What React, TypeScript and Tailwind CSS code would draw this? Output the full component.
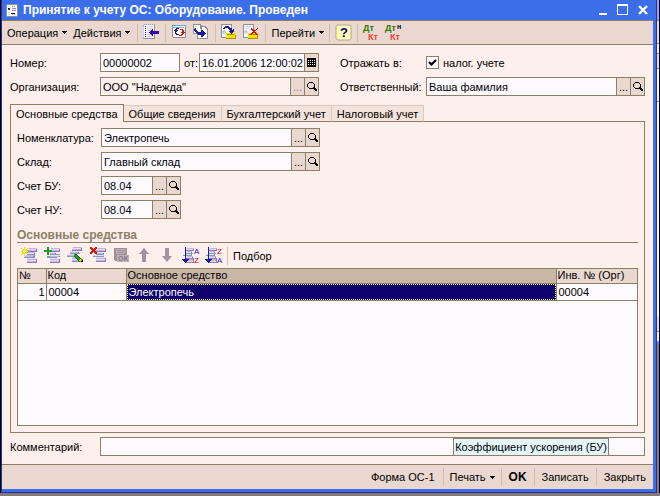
import type { ReactNode } from 'react';

const palette: Record<string, string> = {
    k: '#000000',
    w: '#ffffff',
    n: '#1a1a9c',
    b: '#3300b0',
    g: '#8f8f9c',
    l: '#c9cfe6',
    v: '#c4b4e0',
    p: '#8a7fae',
    q: '#e6dcf4',
    t: '#7d9fb4',
    c: '#6fa8e0',
    y: '#f2e400',
    o: '#a89400',
    r: '#dd1500',
    e: '#1f9a2a',
    d: '#0f6a14',
    s: '#9c8f98',
    u: '#c0b2b4',
};

// one character is one pixel, a dot is empty
const Pixels = ({ rows, size = 17, children }: { rows: string[]; size?: number; children?: ReactNode }) => (
    <svg
        width={size}
        height={size}
        viewBox={`0 0 ${size} ${size}`}
        shapeRendering="crispEdges"
        className="shrink-0 overflow-visible"
        aria-hidden="true"
    >
        {rows.flatMap((row, y) =>
            [...row].map((ch, x) =>
                palette[ch] ? <rect key={`${x}-${y}`} x={x} y={y} width="1" height="1" fill={palette[ch]} /> : null
            )
        )}
        {children}
    </svg>
);

const formRows = [
    'gggggggggggg',
    'gwwwwwwwwwwg',
    'gwlwwwgwgwwg',
    'gwwwwwwwwwwg',
    'gwnnwwggggwg',
    'gwnnwwwwwwwg',
    'gwwwwwggggwg',
    'gwwwwwwwwwwg',
    'gwllwwwwwwwg',
    'gwwwwkkkkwwg',
    'gwllwwllllwg',
    'gwwwwwwwwwwg',
    'gggggggggggg',
];

const listRows = [
    '.c.c.c.c.c.c....',
    'cwwwwwwwwwwg....',
    'lwnwllllllwg....',
    'lwwwwwwwwwwg....',
    'lwnwllllllwg....',
    'lwwwwwwwwbwg....',
    'lwnwllllbbwg....',
    'lwwwwwwbbbbbbbbb',
    'lwnwllbbbbbbbbbb',
    'lwwwwwwbbbbbbbbb',
    'lwnwllllbbwg....',
    'lwwwwwwwwbwg....',
    'lwnwllllllwg....',
    'lwwwwwwwwwwg....',
    'cggggggggggg....',
];

const refreshRows = [
    '.................',
    '.ececcccccccccc..',
    '.cwwwwwwwwwwwwc..',
    '.gcccccccccccwg..',
    '.gwwwnnnwwwwwwg..',
    '.gwwnnwwwrrrwwg..',
    '.gwnnnnwwwwrrwg..',
    '.gwwnnwwwwwrrwg..',
    '.gwwnwwwwwrrrrg..',
    '.gwwnnwwwwwrrwg..',
    '.gwwwnnnwwrrwwg..',
    '.gwwwwwwrrrwwwg..',
    '.gwwwwwwwwwwwwg..',
    '.lggggggggggggg..',
];

const copyRows = [
    'gggggggg.........',
    'gwwwwwwgg........',
    'gwllwwwgggggg....',
    'gwwwwwwggwwwgg...',
    'gvnwlwwggwwwwgg..',
    'gnnwwwwwgwwwwwg..',
    'gnnnwwwwnnwwwwg..',
    'gwnnnwwwnnnwwwg..',
    'gwwnnnnnnnnnwwg..',
    'ggggnnnnnnnnnwg..',
    '....gnnnnnnnwwg..',
    '....gwwwnnnwwwg..',
    '....gwwwnnwwwwg..',
    '....gwwwwwwwwwg..',
    '....ggggggggggg..',
];

const postRows = [
    'ggggggggggg......',
    'gwwwwwwwwwg......',
    'gwwwnnnnwwg......',
    'gwwnnnnnnwg......',
    'gwnnwwwnnnn......',
    'gwwwwwwwnnn.n....',
    'gwllwwwwwnnnn....',
    'gllllwwwnnnnn....',
    'gllllwwwwnnn.....',
    'gwllwyyyyynyyyy..',
    'gwwwwyoooooooyy..',
    'gwwwwyyyyyyyyyo..',
    'gwwwwyyyyyyyyyo..',
    'gggggyyyyyyyyyo..',
    '.....oooooooooo..',
];

const unpostRows = [
    'ggggggggggg......',
    'gwwwwwwwwwg......',
    'gwllllllwwg......',
    'gwwwwwwwwwg......',
    'gwllllwwrwg...r..',
    'gwwwwwwwrrr..r...',
    'gwllwwwwwrrrr....',
    'gllllwwwwwrr.....',
    'gllllwwwwrrrr....',
    'gwllwyyyrryyrry..',
    'gwwwwyorroooorr..',
    'gwwwwyyyyyyyyyo..',
    'gwwwwyyyyyyyyyo..',
    'gggggyyyyyyyyyo..',
    '.....oooooooooo..',
];

const newRows = [
    '...y.............',
    'y..y..yqvvvvvvvv.',
    '.yyyyyqqqqqqqqqp.',
    '.yywyyvvvvvvvvvp.',
    'yywwwyyppppppppp.',
    '.yywyytvvvvvvv...',
    '.yyyyyqqqqqqqp...',
    'y..y..tttttttt...',
    '...y.vvvvvvvvp...',
    '...qvvvvvvvvpp...',
    '...ttttttttttt...',
    '......qqqqqqqqqq.',
    '......vvvvvvvvvp.',
    '......qqqqqqqqqp.',
    '......vvvvvvvvvp.',
    '......pppppppppp.',
];

const addRows = [
    '...ee............',
    '...ee.qvvvvvvvvv.',
    '...ee.qqqqqqqqqp.',
    'eeeeeeeevvvvvvvp.',
    'eeeeeeeepppppppp.',
    '...ee.qqqqqq.....',
    '...ee.vvvvvp.....',
    '...ee.tttttttttt.',
    '......qqqqqqqqqq.',
    '...tttvvvvvvvvvp.',
    '...tttttttttt....',
    '......qqqqqqqqqq.',
    '......vvvvvvvvvp.',
    '......qqqqqqqqqp.',
    '......vvvvvvvvvp.',
    '......pppppppppp.',
];

const editRows = [
    '.....qvvvvvvvvv..',
    '.....qqqqqqqqqp..',
    '.....vvvvvvvvvp..',
    '.....pppppppppp..',
    '...qqqqqqqqq.....',
    '...vvvvvvvvp.....',
    '...tttttttttt....',
    'qqqqqqqodd.......',
    'vvvvvvveeed......',
    'tttttttdeeed.....',
    '.....qvvdeeed....',
    '.....vvvvdeeedo..',
    '.....qqqqqdeeyoo.',
    '.....vvvvvvdyyok.',
    '.....pppppppdokk.',
];

const deleteRows = [
    'rr...rr..........',
    'rrr.rrrqvvvvvvvv.',
    '.rrrrrqqqqqqqqqp.',
    '..rrrvvvvvvvvvvp.',
    '.rrrrrpppppppppp.',
    'rrr.rrrqqqqqqq...',
    'rr...rrvvvvvvp...',
    '......tttttttt...',
    '...qqqqqqqqqqq...',
    '...ttttttttttt...',
    '......qqqqqqqqqq.',
    '......vvvvvvvvvp.',
    '......qqqqqqqqqp.',
    '......vvvvvvvvvp.',
    '......pppppppppp.',
];

const diskRows = [
    '.................',
    '.sssssssssssss...',
    '.ssuuuuuuuuuss...',
    '.ssussssssssus...',
    '.ssuuuuuuuuuss...',
    '.ssussssssssus...',
    '.ssuuuuuuuuuss...',
    '.sssssssssssss...',
    '.sssuuuuuuuuuuuu.',
    '.sssuuuuuuuuuuuu.',
    '.sssuuuuuuuuuuuu.',
    '.sssuuuuuuuuuuuu.',
    '.sssuuuuuuuuuuuu.',
    '..ssuuuuuuuuuuuu.',
    '....uuuuuuuuuuuu.',
];

const sortRows = [
    '...n.............',
    '...nqvvvvvvv.....',
    '...nqqqqqqqp.....',
    '...npppppppp.....',
    '...nqvvvvv.......',
    '...nqqqqqp.......',
    '...nttttttt......',
    '.qqnqqqqqt.......',
    '.ttntttttt.......',
    '...nqvvvvvv......',
    '...nqqqqqqp......',
    '...npppppppp.....',
    'nnnnnnnvvvvp.....',
    '.nnnnnvvvvvp.....',
    '..nnnqqqqqqp.....',
    '...npppppppp.....',
];

const searchRows = [
    '.............',
    '...kkkk......',
    '..k....k.....',
    '.k......k....',
    '.k......k....',
    '.k......k....',
    '..k....kk....',
    '...kkkkkkk...',
    '........kkk..',
    '.........kk..',
];

const SortIcon = ({ top, bottom }: { top: string; bottom: string }) => (
    <Pixels rows={sortRows}>
        <text x="12" y="7" fontSize="8" fill={top === 'Z' ? '#d00010' : '#1a1a9c'}>
            {top}
        </text>
        <text x="12" y="16" fontSize="8" fill={bottom === 'Z' ? '#d00010' : '#1a1a9c'}>
            {bottom}
        </text>
    </Pixels>
);

const PostingsIcon = ({ tax }: { tax?: boolean }) => (
    <svg width="17" height="17" viewBox="0 0 17 17" aria-hidden="true" fontWeight="bold" className="overflow-visible">
        <text x="0" y="7" fontSize="9" fill="#2c7a00">Дт</text>
        <text x="5" y="16" fontSize="9" fill="#f03c3c">Кт</text>
        {tax && <text x="12" y="5" fontSize="7" fill="#000000">н</text>}
    </svg>
);

const HelpIcon = () => (
    <svg width="17" height="17" viewBox="0 0 17 17" aria-hidden="true">
        <rect x="1" y="1" width="15" height="15" rx="2" fill="#ffffb4" stroke="#a8a890" />
        <text x="5" y="13" fontSize="13" fontWeight="bold" fill="#00007c">?</text>
    </svg>
);

const ArrowIcon = ({ down }: { down?: boolean }) => (
    <svg width="17" height="17" viewBox="0 0 17 17" aria-hidden="true">
        <path d={down ? 'M6 1h4v8h3l-5 6-5-6h3z' : 'M6 15h4V7h3L8 1 3 7h3z'} fill="#a094a4" />
    </svg>
);

const Caret = () => (
    <svg width="5" height="3" viewBox="0 0 5 3" shapeRendering="crispEdges" aria-hidden="true">
        <path d="M0 0h5v1H4v1H3v1H2V2H1V1H0z" fill="#000000" />
    </svg>
);

const CalendarIcon = () => (
    <svg width="11" height="11" viewBox="0 0 11 11" shapeRendering="crispEdges" className="shrink-0" aria-hidden="true">
        <path d="M1 1h9v9H1z" fill="#000000" />
        <path
            d="M2 3h1v1H2zM4 3h1v1H4zM6 3h1v1H6zM8 3h1v1H8zM2 5h1v1H2zM4 5h1v1H4zM6 5h1v1H6zM8 5h1v1H8zM2 7h1v1H2zM4 7h1v1H4zM6 7h1v1H6zM8 7h1v1H8z"
            fill="#ffffff"
        />
    </svg>
);

const IconButton = ({ label, children }: { label: string; children: ReactNode }) => (
    <button type="button" aria-label={label} className="flex w-[17px] shrink-0 items-center justify-center">
        {children}
    </button>
);

const Separator = () => <span className="h-[18px] w-px shrink-0 bg-[#cdbdad]" />;

type FieldProps = {
    id: string;
    value?: string;
    picker?: 'search' | 'date';
    disabled?: boolean;
    className?: string;
};

const Field = ({ id, value = '', picker, disabled, className = '' }: FieldProps) => (
    <div className={`flex h-[19px] min-w-0 border border-[#8c7f66] bg-[#fdfaff] ${className}`}>
        <input
            id={id}
            defaultValue={value}
            className={`min-w-0 flex-1 outline-none ${disabled ? 'm-px bg-[#fdefeb] pl-px' : 'pl-[2px]'}`}
        />
        {picker === 'search' && (
            <>
                <button
                    type="button"
                    aria-label="Выбрать"
                    className={`w-[14px] shrink-0 border-l border-[#8c7f66] bg-[#ead8d0] leading-3 ${disabled ? 'text-[#8c7f66]' : ''}`}
                >
                    ...
                </button>
                <button
                    type="button"
                    aria-label="Открыть"
                    className="flex w-[14px] shrink-0 items-center justify-center border-l border-[#8c7f66] bg-[#ead8d0]"
                >
                    <Pixels rows={searchRows} size={12} />
                </button>
            </>
        )}
        {picker === 'date' && (
            <button
                type="button"
                aria-label="Календарь"
                className="flex w-[14px] shrink-0 items-center justify-center border-l border-[#8c7f66] bg-[#ead8d0]"
            >
                <CalendarIcon />
            </button>
        )}
    </div>
);

const TitleBar = () => (
    <header className="flex h-5 shrink-0 items-center bg-[#3c6eea] pr-1 pl-1 text-white">
        <Pixels rows={formRows} size={13} />
        <h1 className="ml-1 flex-1 truncate text-[12px] font-bold">Принятие к учету ОС: Оборудование. Проведен</h1>
        <div className="flex items-center gap-2">
            <button type="button" aria-label="Свернуть">
                <svg width="12" height="12" viewBox="0 0 12 12" aria-hidden="true">
                    <path d="M2 9h8v2H2z" fill="#ffffff" />
                </svg>
            </button>
            <button type="button" aria-label="Развернуть">
                <svg width="12" height="12" viewBox="0 0 12 12" shapeRendering="crispEdges" aria-hidden="true">
                    <path d="M0 0h11v11H0zM1 2v8h9V2z" fill="#ffffff" fillRule="evenodd" />
                </svg>
            </button>
            <button type="button" aria-label="Закрыть окно">
                <svg width="12" height="12" viewBox="0 0 12 12" aria-hidden="true">
                    <path d="M2 2l8 8M10 2l-8 8" stroke="#ffffff" strokeWidth="2.4" />
                </svg>
            </button>
        </div>
    </header>
);

const MainToolbar = () => (
    <div className="flex h-[25px] shrink-0 items-center gap-[5px] border-t border-b border-[#8c7f66] bg-[#ead8d0] pl-[5px]">
        <button type="button" className="mr-px flex items-center gap-1">
            Операция <Caret />
        </button>
        <button type="button" className="mr-[2px] flex items-center gap-1">
            Действия <Caret />
        </button>
        <Separator />
        <IconButton label="Найти в списке"><Pixels rows={listRows} /></IconButton>
        <Separator />
        <IconButton label="Перечитать"><Pixels rows={refreshRows} /></IconButton>
        <IconButton label="Скопировать"><Pixels rows={copyRows} /></IconButton>
        <Separator />
        <IconButton label="Провести"><Pixels rows={postRows} /></IconButton>
        <IconButton label="Отмена проведения"><Pixels rows={unpostRows} /></IconButton>
        <Separator />
        <button type="button" className="flex items-center gap-1">
            Перейти <Caret />
        </button>
        <Separator />
        <IconButton label="Справка"><HelpIcon /></IconButton>
        <Separator />
        <IconButton label="Проводки"><PostingsIcon /></IconButton>
        <IconButton label="Налоговые проводки"><PostingsIcon tax /></IconButton>
    </div>
);

const tabs = ['Основные средства', 'Общие сведения', 'Бухгалтерский учет', 'Налоговый учет'];

const Tabs = () => (
    <div role="tablist" className="relative z-10 -mb-px flex h-[18px] items-stretch">
        {tabs.map((tab, i) => (
            <button
                key={tab}
                type="button"
                role="tab"
                aria-selected={i === 0}
                className={
                    i === 0
                        ? 'border-t border-r border-l border-[#8c7f66] bg-[#fdefeb] px-[5px]'
                        : 'mt-px border-t border-r border-b border-t-[#d8c8ba] border-r-[#d8c8ba] border-b-[#8c7f66] bg-[#f3e3dc] px-[5px]'
                }
            >
                {tab}
            </button>
        ))}
    </div>
);

const fields = [
    { id: 'item', label: 'Номенклатура:', value: 'Электропечь', width: 'w-[219px]' },
    { id: 'stock', label: 'Склад:', value: 'Главный склад', width: 'w-[219px]' },
    { id: 'account-bu', label: 'Счет БУ:', value: '08.04', width: 'w-20' },
    { id: 'account-nu', label: 'Счет НУ:', value: '08.04', width: 'w-20' },
];

const ListToolbar = () => (
    <div className="flex h-[25px] shrink-0 items-center gap-[5px] pl-1">
        <div className="flex gap-[6px]">
            <IconButton label="Добавить"><Pixels rows={newRows} /></IconButton>
            <IconButton label="Добавить копированием"><Pixels rows={addRows} /></IconButton>
            <IconButton label="Изменить"><Pixels rows={editRows} /></IconButton>
            <IconButton label="Удалить"><Pixels rows={deleteRows} /></IconButton>
            <IconButton label="Закончить редактирование">
                <Pixels rows={diskRows}>
                    <text x="5" y="14" fontSize="7" fontWeight="bold" fill="#85788a">OK</text>
                </Pixels>
            </IconButton>
            <IconButton label="Переместить вверх"><ArrowIcon /></IconButton>
            <IconButton label="Переместить вниз"><ArrowIcon down /></IconButton>
            <IconButton label="По возрастанию"><SortIcon top="A" bottom="Z" /></IconButton>
            <IconButton label="По убыванию"><SortIcon top="Z" bottom="A" /></IconButton>
        </div>
        <Separator />
        <button type="button">Подбор</button>
    </div>
);

const AssetTable = () => (
    <div className="flex-1 border border-[#8c7f66] bg-[#fdfaff]">
        <table className="w-full table-fixed border-collapse text-left whitespace-nowrap">
            <colgroup>
                <col className="w-7" />
                <col className="w-20" />
                <col />
                <col className="w-[81px]" />
            </colgroup>
            <thead>
                <tr className="h-[14px] border-b border-[#8c7f66] bg-[#ead8d0] leading-[13px]">
                    <th className="border-r border-[#8c7f66] px-px font-normal">№</th>
                    <th className="border-r border-[#8c7f66] px-px font-normal">Код</th>
                    <th className="border-r border-[#8c7f66] bg-[#cab8a6] px-px font-normal">Основное средство</th>
                    <th className="px-px font-normal">Инв. № (Орг)</th>
                </tr>
            </thead>
            <tbody>
                <tr className="h-[17px] border-b border-[#8c7f66] leading-[14px]">
                    <td className="border-r border-[#8c7f66] px-px text-right">1</td>
                    <td className="border-r border-[#8c7f66] px-[2px]">00004</td>
                    <td className="border-r border-[#8c7f66] p-0">
                        <div className="border border-dotted border-[#ffff60] bg-[#10006e] px-px text-white">Электропечь</div>
                    </td>
                    <td className="px-[2px]">00004</td>
                </tr>
            </tbody>
        </table>
    </div>
);

const Footer = () => (
    <footer className="flex h-[25px] shrink-0 items-center justify-end gap-[6px] border-t border-[#8c7f66] bg-[#ead8d0] pr-[6px]">
        <button type="button" className="pr-[2px]">Форма ОС-1</button>
        <Separator />
        <button type="button" className="flex items-center gap-1">
            Печать <Caret />
        </button>
        <Separator />
        <button type="button" className="px-px text-[12px] font-bold">OK</button>
        <Separator />
        <button type="button" className="px-px">Записать</button>
        <Separator />
        <button type="button" className="px-px">Закрыть</button>
    </footer>
);

// sliver of the windows that lie behind this one
const Backdrop = () => (
    <div className="flex w-[2px] shrink-0 flex-col bg-[#857a78]">
        <span className="h-5 bg-[#9aa4ee]" />
        <span className="h-6 border-t border-b border-[#8c7f66] bg-[#ead8d0]" />
        <span className="h-[9px] bg-[#fdefeb]" />
        <span className="h-4 border-t border-b border-[#8c7f66] bg-[#ead8d0]" />
        <span className="h-[33px] border-b border-[#8c7f66] bg-[#fdfaff]" />
        <span className="h-[216px] border-b border-[#d8c8ba] bg-[#fdfaff]" />
        <span className="h-[14px] border-b border-[#8c7f66] bg-[#ead8d0]" />
        <span className="h-[9px] bg-[#fdefeb]" />
        <span className="h-[3px] bg-[#6f86e8]" />
    </div>
);

export default function App() {
    return (
        <div className="flex min-h-screen flex-col bg-[#857a78] font-['Liberation_Sans',Arial,sans-serif] text-[11px] leading-4 text-black">
            <div className="flex flex-1 border-r border-l border-black">
                <div className="flex min-w-0 flex-1 border-r border-b border-l border-[#20309c]">
                    <div className="flex min-w-0 flex-1 flex-col border-r-[3px] border-b-[3px] border-[#3c6eea] bg-[#fdefeb]">
                        <TitleBar />
                        <MainToolbar />

                        <main className="flex flex-1 flex-col p-2">
                            <div className="flex flex-col gap-[5px]">
                                <div className="flex items-center">
                                    <label htmlFor="number" className="w-[90px]">Номер:</label>
                                    <Field id="number" value="00000002" className="w-20" />
                                    <label htmlFor="date" className="w-[19px] pl-1">от:</label>
                                    <Field id="date" value="16.01.2006 12:00:02" picker="date" className="w-[120px]" />
                                    <span className="ml-[21px] w-[86px]">Отражать в:</span>
                                    <label className="flex items-center gap-1">
                                        <span className="grid">
                                            <input
                                                type="checkbox"
                                                defaultChecked
                                                className="peer col-start-1 row-start-1 size-[13px] appearance-none border border-[#8c7f66] bg-[#fdfaff]"
                                            />
                                            <svg
                                                viewBox="0 0 13 13"
                                                className="pointer-events-none invisible col-start-1 row-start-1 size-[13px] peer-checked:visible"
                                                aria-hidden="true"
                                            >
                                                <path d="M3 6l2.500 2.500L10 4" fill="none" stroke="#000000" strokeWidth="2.200" />
                                            </svg>
                                        </span>
                                        налог. учете
                                    </label>
                                </div>
                                <div className="flex items-center">
                                    <label htmlFor="company" className="w-[90px]">Организация:</label>
                                    <Field id="company" value={'ООО "Надежда"'} picker="search" disabled className="w-[219px]" />
                                    <label htmlFor="person" className="ml-[21px] w-[86px] whitespace-nowrap">Ответственный:</label>
                                    <Field id="person" value="Ваша фамилия" picker="search" className="flex-1" />
                                </div>
                            </div>

                            <div className="mt-2 flex flex-1 flex-col">
                                <Tabs />
                                <div role="tabpanel" className="flex flex-1 flex-col border border-[#8c7f66] p-[6px]">
                                    <div className="flex flex-col gap-[5px]">
                                        {fields.map((f) => (
                                            <div key={f.id} className="flex items-center">
                                                <label htmlFor={f.id} className="w-[84px] whitespace-nowrap">{f.label}</label>
                                                <Field id={f.id} value={f.value} picker="search" className={f.width} />
                                            </div>
                                        ))}
                                    </div>
                                    <h2 className="mt-[9px] border-b border-[#8c7f66] text-[12px] leading-[14px] font-bold text-[#8c7f66]">
                                        Основные средства
                                    </h2>
                                    <ListToolbar />
                                    <AssetTable />
                                </div>
                            </div>

                            <div className="mt-1 flex items-center">
                                <label htmlFor="comment" className="w-[90px]">Комментарий:</label>
                                <div className="relative flex flex-1">
                                    <Field id="comment" className="flex-1" />
                                    <div
                                        role="tooltip"
                                        className="absolute top-px right-9 border border-[#8c7f66] bg-[#e4f6fb] px-px whitespace-nowrap"
                                    >
                                        Коэффициент ускорения (БУ)
                                    </div>
                                </div>
                            </div>
                        </main>

                        <Footer />
                    </div>
                </div>
                <Backdrop />
            </div>
            <div className="h-[3px] shrink-0" />
        </div>
    );
}
